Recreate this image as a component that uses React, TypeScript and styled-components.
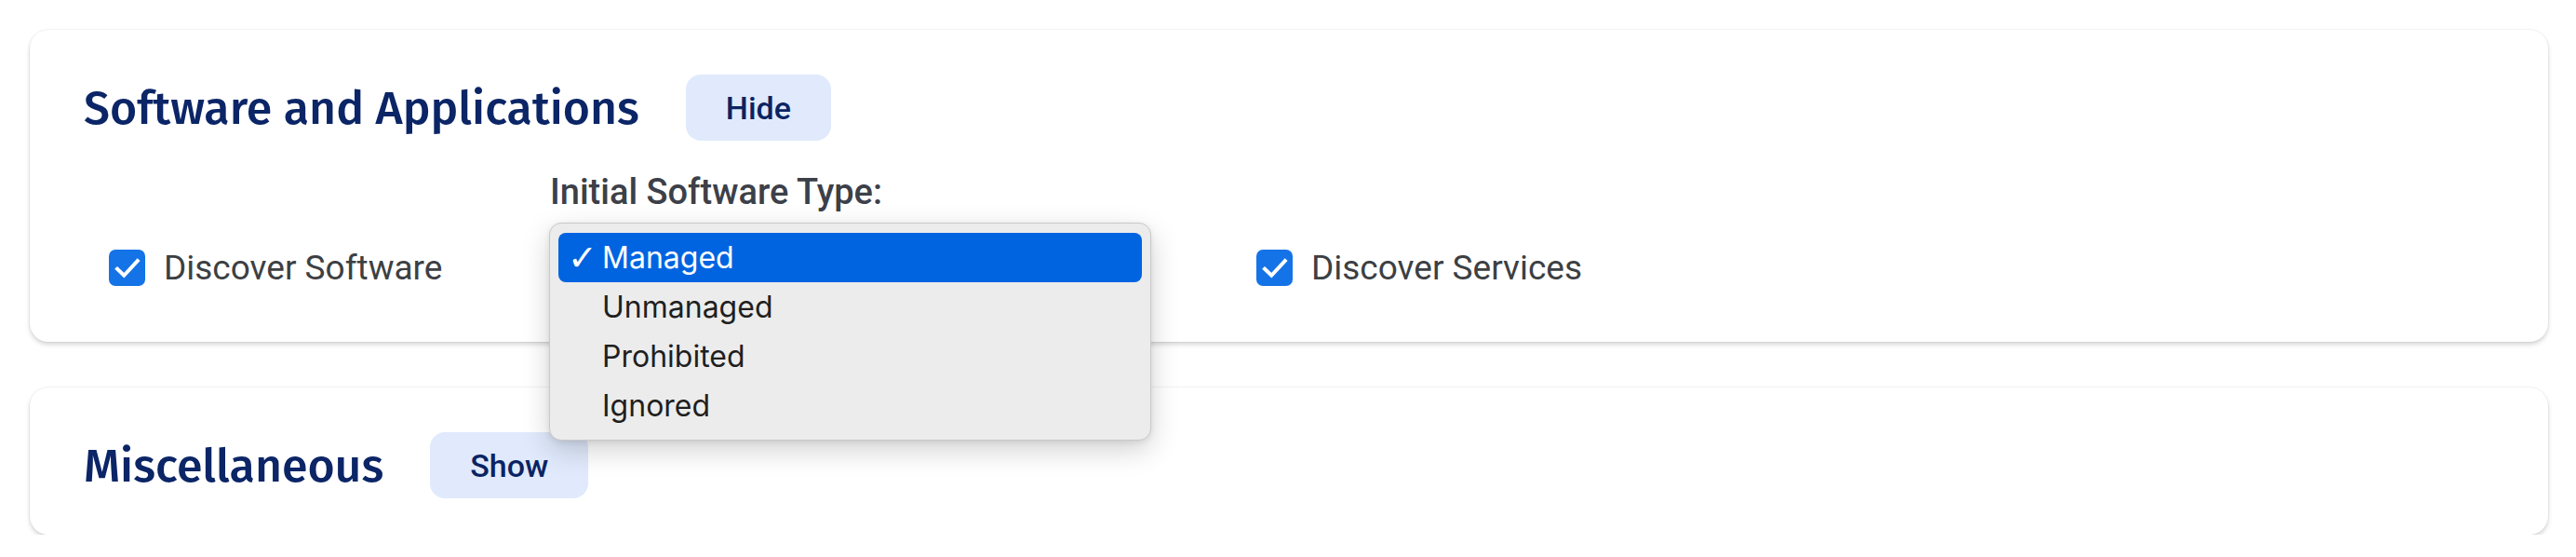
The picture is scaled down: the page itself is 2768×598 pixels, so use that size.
import styled, { createGlobalStyle } from "styled-components";

const GlobalStyle = createGlobalStyle`
  body {
    margin: 0;
    background: #ffffff;
  }
`

const Page = styled.div`
  display: flex;
  flex-direction: column;
  gap: 49px;
  padding: 32px 30px 0 32px;
  font-family: Roboto, "Liberation Sans", sans-serif;
`

const Card = styled.section<{ $bottom: number }>`
  position: relative;
  background: #fff;
  border-radius: 20px;
  box-shadow: 0 0 0 1px rgba(0, 0, 0, 0.04), 0 3px 5px rgba(0, 0, 0, 0.16);
  padding: 48px 58px ${p => p.$bottom}px;
`

const Header = styled.div`
  display: flex;
  align-items: center;
  gap: 50px;
`

const Title = styled.h2`
  margin: 0;
  font-family: "Fira Sans", Lato, sans-serif;
  font-weight: 500;
  font-size: 50px;
  color: #0b2566;
`

const ToggleButton = styled.button`
  height: 71px;
  padding: 0 43px;
  border: none;
  border-radius: 16px;
  background: #e0eafc;
  color: #0a2463;
  font-family: Roboto, sans-serif;
  font-size: 34px;
  font-weight: 500;
`

const OptionsRow = styled.div`
  display: flex;
  align-items: flex-end;
  gap: 113px;
  margin-top: 34px;
  padding-left: 27px;
`

const CheckItem = styled.label<{ $width?: number }>`
  display: flex;
  align-items: center;
  gap: 20px;
  flex: none;
  width: ${p => (p.$width ? `${p.$width}px` : "auto")};
  font-size: 37px;
  line-height: 43px;
  color: #3c4043;
`

const CheckBox = styled.span`
  display: flex;
  align-items: center;
  justify-content: center;
  width: 39px;
  height: 39px;
  border-radius: 7px;
  background: #1473e6;
`

const FieldGroup = styled.div`
  position: relative;
  width: 646px;
`

const FieldLabel = styled.div`
  font-size: 38px;
  line-height: 43px;
  font-weight: 500;
  color: #3c4049;
`

const SelectAnchor = styled.div`
  height: 81px;
`

const Popup = styled.ul`
  position: absolute;
  top: 54px;
  left: -1px;
  width: 647px;
  box-sizing: border-box;
  margin: 0;
  padding: 10px 9px;
  list-style: none;
  background: #ececec;
  border: 1px solid #c9c9c9;
  border-radius: 13px;
  box-shadow: 0 10px 30px rgba(0, 0, 0, 0.18), 0 2px 6px rgba(0, 0, 0, 0.08);
  z-index: 5;
`

const PopupItem = styled.li<{ $selected?: boolean }>`
  display: flex;
  align-items: center;
  height: 53px;
  padding-left: 10px;
  border-radius: 8px;
  font-family: Inter, "Liberation Sans", sans-serif;
  font-size: 32px;
  color: ${p => (p.$selected ? "#fff" : "#1f1f1f")};
  background: ${p => (p.$selected ? "#0064e1" : "transparent")};
`

const Tick = styled.span`
  width: 37px;
  font-family: "DejaVu Sans", sans-serif;
  font-size: 38px;
  font-weight: 700;
  line-height: 1;
`

const CheckIcon = () => (
  <svg width="30" height="30" viewBox="0 0 24 24" fill="none">
    <path d="M3.2 12.6 9 18.2 20.6 5.6" stroke="#fff" strokeWidth="3.2" strokeLinecap="square" />
  </svg>
)

const types = ["Managed", "Unmanaged", "Prohibited", "Ignored"];

const App = () => {
  return (
    <Page>
      <GlobalStyle />
      <Card $bottom={58}>
        <Header>
          <Title>Software and Applications</Title>
          <ToggleButton>Hide</ToggleButton>
        </Header>
        <OptionsRow>
          <CheckItem $width={361}>
            <CheckBox><CheckIcon /></CheckBox>
            Discover Software
          </CheckItem>
          <FieldGroup>
            <FieldLabel>Initial Software Type:</FieldLabel>
            <SelectAnchor />
            <Popup>
              {types.map((t, i) => (
                <PopupItem key={t} $selected={i === 0}>
                  <Tick>{i === 0 ? "✓" : ""}</Tick>
                  {t}
                </PopupItem>
              ))}
            </Popup>
          </FieldGroup>
          <CheckItem>
            <CheckBox><CheckIcon /></CheckBox>
            Discover Services
          </CheckItem>
        </OptionsRow>
      </Card>
      <Card $bottom={39}>
        <Header>
          <Title>Miscellaneous</Title>
          <ToggleButton>Show</ToggleButton>
        </Header>
      </Card>
    </Page>
  )
}

export default App;
